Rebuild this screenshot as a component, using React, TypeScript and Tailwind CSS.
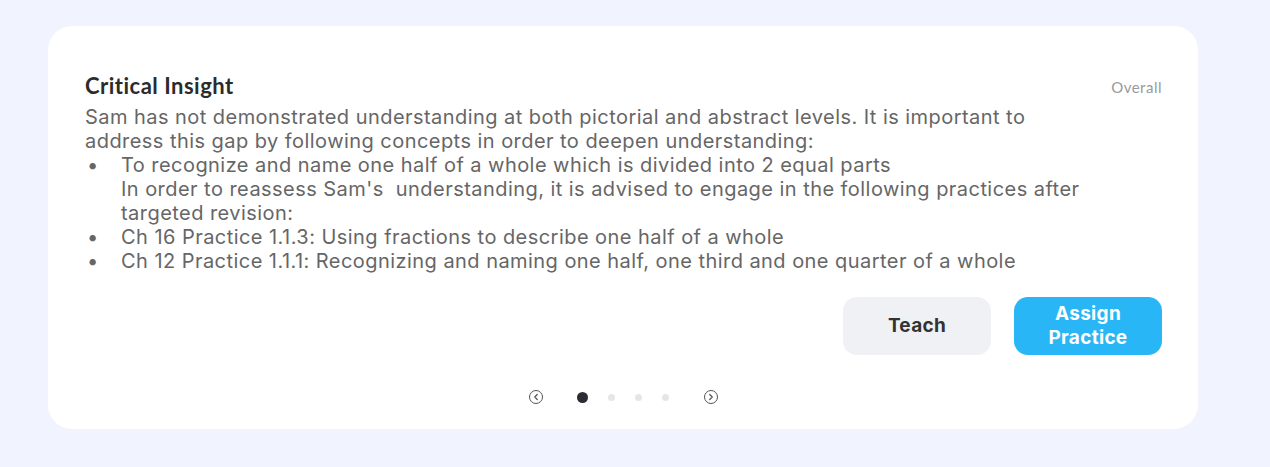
import { ChevronLeft, ChevronRight } from 'lucide-react';

const bodyLines = [
  'Sam has not demonstrated understanding at both pictorial and abstract levels. It is important to',
  'address this gap by following concepts in order to deepen understanding:',
];

export default function App() {
  return (
    <div className="min-h-[467px] w-full bg-[#f1f3fe] pl-[48px] pr-[72px] pt-[26px] pb-[38px]" style={{ fontFamily: 'Inter, "Noto Sans", sans-serif' }}>
      <div className="flex h-[403px] flex-col rounded-[24px] bg-white pl-[37px] pr-[36px] pt-[46px]">
        {/* header */}
        <div className="flex items-start justify-between">
          <h2 className="text-[22px] leading-[28px] font-bold text-[#2b2b2b] tracking-[0.5px]" style={{ fontFamily: 'Lato, "Noto Sans", sans-serif' }}>
            Critical Insight
          </h2>
          <span className="mt-[6px] text-[15px] leading-[18px] tracking-[0.5px] text-[#9a9a9a]" style={{ fontFamily: 'Lato, sans-serif' }}>Overall</span>
        </div>

        {/* insight text */}
        <div className="mt-[5px] text-[20px] leading-[24px] tracking-[0.45px] text-[#666666] whitespace-nowrap">
          {bodyLines.map((l) => (
            <div key={l}>{l}</div>
          ))}
          <div className="flex">
            <span className="w-[36px] pl-[2px]">•</span>
            <div>
              <div>To recognize and name one half of a whole which is divided into 2 equal parts</div>
              <div>In order to reassess Sam's&nbsp; understanding, it is advised to engage in the following practices after</div>
              <div>targeted revision:</div>
            </div>
          </div>
          <div className="flex">
            <span className="w-[36px] pl-[2px]">•</span>
            <div>Ch 16 Practice 1.1.3: Using fractions to describe one half of a whole</div>
          </div>
          <div className="flex">
            <span className="w-[36px] pl-[2px]">•</span>
            <div>Ch 12 Practice 1.1.1: Recognizing and naming one half, one third and one quarter of a whole</div>
          </div>
        </div>

        {/* actions */}
        <div className="mt-[24px] flex justify-end gap-[23px]">
          <button className="h-[58px] w-[148px] rounded-[14px] bg-[#f0f1f4] text-[19px] tracking-[0.3px] font-bold text-[#333333]">
            Teach
          </button>
          <button className="h-[58px] w-[148px] rounded-[14px] bg-[#29b6f6] text-[19px] leading-[24px] tracking-[0.3px] font-bold text-white">
            Assign
            <br />
            Practice
          </button>
        </div>

        {/* pager */}
        <div className="mt-[35px] flex items-center justify-center">
          <button className="flex h-[14px] w-[14px] items-center justify-center rounded-full border-[1.5px] border-[#555555] text-[#555555]">
            <ChevronLeft size={10} strokeWidth={3} />
          </button>
          <div className="ml-[34px] flex items-center gap-[20px]">
            <span className="h-[11px] w-[11px] rounded-full bg-[#2b2b33]" />
            <span className="h-[7px] w-[7px] rounded-full bg-[#e6e6e6]" />
            <span className="h-[7px] w-[7px] rounded-full bg-[#e6e6e6]" />
            <span className="h-[7px] w-[7px] rounded-full bg-[#e6e6e6]" />
          </div>
          <button className="ml-[35px] flex h-[14px] w-[14px] items-center justify-center rounded-full border-[1.5px] border-[#555555] text-[#555555]">
            <ChevronRight size={10} strokeWidth={3} />
          </button>
        </div>
      </div>
    </div>
  );
}
